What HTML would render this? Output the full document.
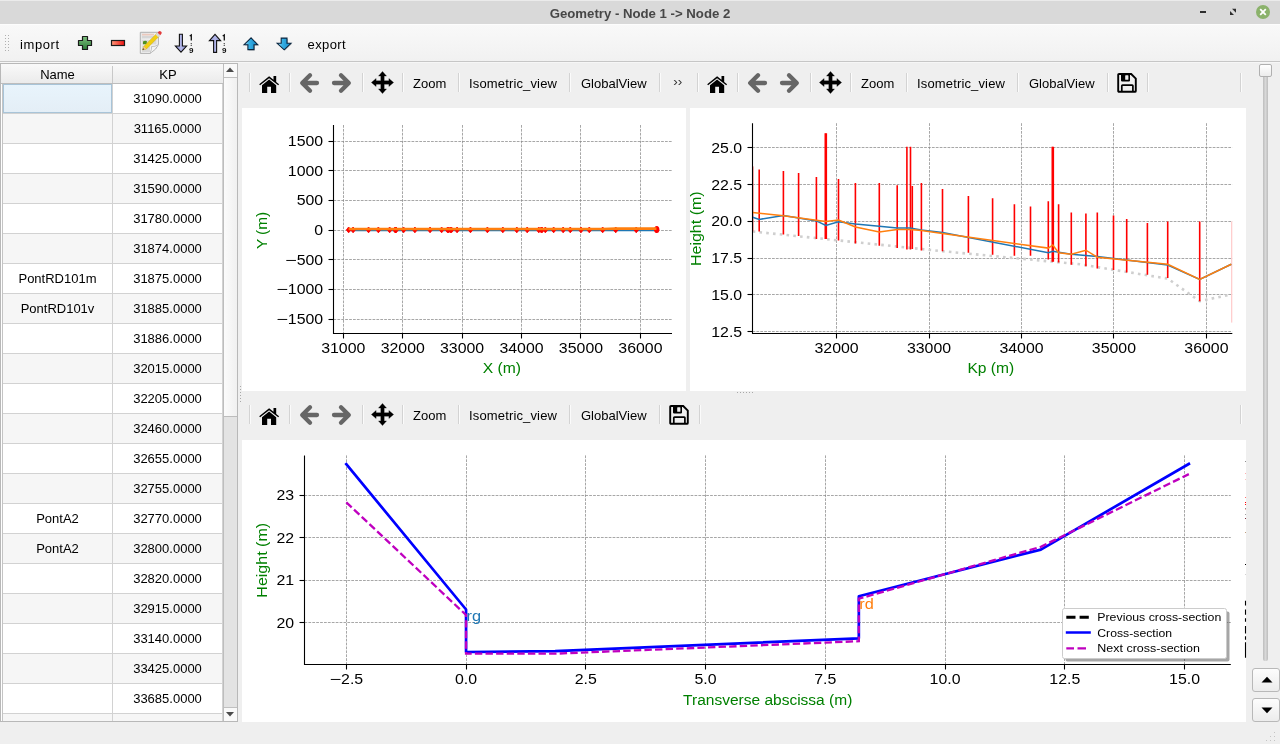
<!DOCTYPE html>
<html><head><meta charset="utf-8">
<style>
*{margin:0;padding:0;box-sizing:border-box}
html,body{width:1280px;height:744px;overflow:hidden;-webkit-font-smoothing:antialiased;will-change:transform;background:#efefef;font-family:"Liberation Sans",sans-serif;font-size:13px;color:#000;position:relative}
div{position:absolute}
svg{position:absolute;overflow:visible}
.t13{font-size:13px;white-space:nowrap}
.row{left:2px;width:220px;height:30px;border-bottom:1px solid #d2d2d2}
.c1,.c2{top:0;height:29px;line-height:30px;text-align:center;white-space:nowrap}
.c1{left:0;width:110px;border-right:1px solid #d2d2d2}
.c2{left:110px;width:110px;border-right:1px solid #d2d2d2}
.sep{width:2px;height:19px;border-left:1px solid #d4d4d4;border-right:1px solid #fbfbfb}
.canvas{background:#fff}
</style></head><body>

<div style="left:0;top:0;width:1280px;height:24px;background:#d9d9d9;border-top:1px solid #ebebeb"></div>
<div class="t13" style="left:0;top:6px;width:1280px;text-align:center;font-weight:bold;color:#474747;font-size:13.2px;line-height:16px">Geometry - Node 1 -&gt; Node 2</div>
<div style="left:1200px;top:11px;width:6px;height:2px;background:#2e2e2e"></div>
<svg style="left:1229px;top:8px" width="8" height="8" viewBox="0 0 8 8"><path d="M3 0.8H7V4.8z" fill="#2e2e2e"/><path d="M1 2.9V7H5z" fill="#2e2e2e"/></svg>
<svg style="left:1256px;top:5px" width="14" height="14" viewBox="0 0 14 14"><circle cx="7" cy="7" r="7" fill="#8bb26b"/><path d="M4.2 4.2L9.8 9.8M9.8 4.2L4.2 9.8" stroke="#fff" stroke-width="1.8"/></svg>
<div style="left:0;top:24px;width:1280px;height:37px;background:linear-gradient(#f9f9f9,#f1f1f1);border-top:1px solid #fdfdfd"></div>
<div style="left:0;top:61px;width:1280px;height:1px;background:#c6c6c6"></div>
<div style="left:0;top:62px;width:1280px;height:1px;background:#f6f6f6"></div>
<div style="left:5px;top:35px;width:1px;height:1px;background:#b0b0b0"></div>
<div style="left:8px;top:35px;width:1px;height:1px;background:#b0b0b0"></div>
<div style="left:5px;top:38px;width:1px;height:1px;background:#b0b0b0"></div>
<div style="left:8px;top:38px;width:1px;height:1px;background:#b0b0b0"></div>
<div style="left:5px;top:41px;width:1px;height:1px;background:#b0b0b0"></div>
<div style="left:8px;top:41px;width:1px;height:1px;background:#b0b0b0"></div>
<div style="left:5px;top:44px;width:1px;height:1px;background:#b0b0b0"></div>
<div style="left:8px;top:44px;width:1px;height:1px;background:#b0b0b0"></div>
<div style="left:5px;top:47px;width:1px;height:1px;background:#b0b0b0"></div>
<div style="left:8px;top:47px;width:1px;height:1px;background:#b0b0b0"></div>
<div style="left:5px;top:50px;width:1px;height:1px;background:#b0b0b0"></div>
<div style="left:8px;top:50px;width:1px;height:1px;background:#b0b0b0"></div>
<div class="t13" style="left:20px;top:37px;line-height:16px;letter-spacing:0.6px">import</div>
<div class="t13" style="left:307.5px;top:37px;line-height:16px;letter-spacing:0.4px">export</div>
<svg style="left:77px;top:35px" width="16" height="16" viewBox="0 0 16 16">
<defs><linearGradient id="gp" x1="0" y1="0" x2="0" y2="1"><stop offset="0" stop-color="#7fc17f"/><stop offset="1" stop-color="#2d7a36"/></linearGradient></defs>
<path d="M5.5 1.5h5v4h4v5h-4v4h-5v-4h-4v-5h4z" fill="url(#gp)" stroke="#1a1a1a" stroke-width="1.2" stroke-linejoin="round"/></svg>
<svg style="left:110px;top:39px" width="16" height="8" viewBox="0 0 16 8">
<defs><linearGradient id="gm" x1="0" y1="0" x2="1" y2="0"><stop offset="0" stop-color="#ff9a7a"/><stop offset="1" stop-color="#ee1111"/></linearGradient></defs>
<rect x="1.5" y="1.5" width="13" height="5" fill="url(#gm)" stroke="#1a1a1a" stroke-width="1.2"/></svg>
<svg style="left:136px;top:28px" width="30" height="28" viewBox="0 0 30 28">
<defs><linearGradient id="gd" x1="0" y1="0" x2="1" y2="1"><stop offset="0" stop-color="#e6e6e6"/><stop offset="1" stop-color="#f8f8f8"/></linearGradient></defs>
<path d="M4.3 4.3H22.4V16.6Q21 21 14.2 25.4H4.3z" fill="url(#gd)" stroke="#a9a9a9" stroke-width="0.9"/>
<path d="M14.2 25.4Q16 20.5 15.5 18.5Q19 19 22.4 16.6" fill="#f4f4f4" stroke="#b4b4b4" stroke-width="0.8"/>
<rect x="6" y="5.8" width="12" height="1.7" fill="#ecc9bd"/>
<rect x="6" y="8" width="14.5" height="2.3" fill="#d6d6d6"/>
<rect x="6" y="12" width="14.5" height="4.5" fill="#d9d9d9"/>
<path d="M7 13.5Q9 12.2 11 13.3L10.5 16.3H7z" fill="#4f8f1f"/>
<rect x="6" y="17.5" width="8" height="6.5" fill="#d9d9d9"/>
<path d="M6.6 21.8L7.8 18.4 20.8 5.4 23.4 8 10.4 21z" fill="#f2cf12" stroke="#c9a400" stroke-width="0.5"/>
<path d="M6.6 21.8L7.8 18.4 10.4 21z" fill="#f1c2a0"/>
<path d="M6.5 21.9L7.1 20.2 8.3 21.3z" fill="#222"/>
<path d="M19.6 6.6L21.6 4.6 24.2 7.2 22.2 9.2z" fill="#d8d8d8"/>
<path d="M21.6 4.6L23 3.2Q24 2.6 24.9 3.5L25.5 4.1Q26 5 25.4 5.8L24.2 7.2z" fill="#e23b3b"/>
</svg>
<svg style="left:175px;top:33px" width="22" height="21" viewBox="0 0 22 21">
<defs><linearGradient id="gs" x1="0" y1="0" x2="1" y2="0"><stop offset="0" stop-color="#8a8fc8"/><stop offset="0.5" stop-color="#b4b8ec"/><stop offset="1" stop-color="#8a8ec6"/></linearGradient></defs>
<path d="M4.4 1.3h3v11.7h4.2l-5.6 6.2-5.6-6.2h4z" fill="url(#gs)" stroke="#111" stroke-width="1.1" stroke-linejoin="miter"/>
<path d="M14.7 3L16.3 2V7.6" fill="none" stroke="#111" stroke-width="1.3"/>
<circle cx="16.2" cy="10.6" r="0.6" fill="#111"/><circle cx="16.2" cy="12.3" r="0.6" fill="#111"/>
<text x="16.2" y="20" font-size="8" font-weight="bold" text-anchor="middle" fill="#111" font-family="Liberation Sans">9</text>
</svg>
<svg style="left:208px;top:33px" width="22" height="21" viewBox="0 0 22 21">
<path d="M5.6 19.4v-11.8h-4.2l5.6-6.2 5.6 6.2h-4v11.8z" fill="url(#gs)" stroke="#111" stroke-width="1.1" stroke-linejoin="miter"/>
<path d="M14.7 3L16.3 2V7.6" fill="none" stroke="#111" stroke-width="1.3"/>
<circle cx="16.2" cy="10.6" r="0.6" fill="#111"/><circle cx="16.2" cy="12.3" r="0.6" fill="#111"/>
<text x="16.2" y="20" font-size="8" font-weight="bold" text-anchor="middle" fill="#111" font-family="Liberation Sans">9</text>
</svg>
<svg style="left:243px;top:37px" width="17" height="15" viewBox="0 0 17 15">
<defs><linearGradient id="gb" x1="0" y1="0" x2="1" y2="0"><stop offset="0" stop-color="#bfeaff"/><stop offset="0.35" stop-color="#39b2e6"/><stop offset="1" stop-color="#1587c8"/></linearGradient></defs>
<path d="M8.9 1.7L15.5 8.5H11.8V13.4H5.7V8.5H1.9z" fill="#000" fill-opacity="0.25"/>
<path d="M8.1 0.9L14.7 7.7H11V12.6H4.9V7.7H1.1z" fill="url(#gb)" stroke="#0a2640" stroke-width="1.1" stroke-linejoin="miter"/></svg>
<svg style="left:276px;top:37px" width="17" height="15" viewBox="0 0 17 15">
<path d="M6 1.9H11.8V7.1H15.8L9 13.6 2 7.1H6z" fill="#000" fill-opacity="0.25"/>
<path d="M5.2 1.1H11V6.3H15L8.2 12.8 1.2 6.3H5.2z" fill="url(#gb)" stroke="#0a2640" stroke-width="1.1" stroke-linejoin="miter"/></svg>
<div style="left:0;top:63px;width:238px;height:659px;background:#fff;border:1px solid #b8b8b8;overflow:hidden">
<div style="left:0;top:0;width:222px;height:20px;background:linear-gradient(#f9f9f9,#ebebeb);border-bottom:1px solid #bdbdbd"></div>
<div style="left:111px;top:2px;width:1px;height:17px;background:#c8c8c8"></div>
<div class="t13" style="left:1px;top:3px;width:111px;text-align:center;line-height:16px">Name</div>
<div class="t13" style="left:112px;top:3px;width:110px;text-align:center;line-height:16px">KP</div>
<div class="row" style="top:20px;background:#ffffff"><div class="c1"></div><div class="c2">31090.0000</div></div>
<div class="row" style="top:50px;background:#f6f6f6"><div class="c1"></div><div class="c2">31165.0000</div></div>
<div class="row" style="top:80px;background:#ffffff"><div class="c1"></div><div class="c2">31425.0000</div></div>
<div class="row" style="top:110px;background:#f6f6f6"><div class="c1"></div><div class="c2">31590.0000</div></div>
<div class="row" style="top:140px;background:#ffffff"><div class="c1"></div><div class="c2">31780.0000</div></div>
<div class="row" style="top:170px;background:#f6f6f6"><div class="c1"></div><div class="c2">31874.0000</div></div>
<div class="row" style="top:200px;background:#ffffff"><div class="c1">PontRD101m</div><div class="c2">31875.0000</div></div>
<div class="row" style="top:230px;background:#f6f6f6"><div class="c1">PontRD101v</div><div class="c2">31885.0000</div></div>
<div class="row" style="top:260px;background:#ffffff"><div class="c1"></div><div class="c2">31886.0000</div></div>
<div class="row" style="top:290px;background:#f6f6f6"><div class="c1"></div><div class="c2">32015.0000</div></div>
<div class="row" style="top:320px;background:#ffffff"><div class="c1"></div><div class="c2">32205.0000</div></div>
<div class="row" style="top:350px;background:#f6f6f6"><div class="c1"></div><div class="c2">32460.0000</div></div>
<div class="row" style="top:380px;background:#ffffff"><div class="c1"></div><div class="c2">32655.0000</div></div>
<div class="row" style="top:410px;background:#f6f6f6"><div class="c1"></div><div class="c2">32755.0000</div></div>
<div class="row" style="top:440px;background:#ffffff"><div class="c1">PontA2</div><div class="c2">32770.0000</div></div>
<div class="row" style="top:470px;background:#f6f6f6"><div class="c1">PontA2</div><div class="c2">32800.0000</div></div>
<div class="row" style="top:500px;background:#ffffff"><div class="c1"></div><div class="c2">32820.0000</div></div>
<div class="row" style="top:530px;background:#f6f6f6"><div class="c1"></div><div class="c2">32915.0000</div></div>
<div class="row" style="top:560px;background:#ffffff"><div class="c1"></div><div class="c2">33140.0000</div></div>
<div class="row" style="top:590px;background:#f6f6f6"><div class="c1"></div><div class="c2">33425.0000</div></div>
<div class="row" style="top:620px;background:#ffffff"><div class="c1"></div><div class="c2">33685.0000</div></div>
<div class="row" style="top:650px;background:#f6f6f6"><div class="c1"></div><div class="c2">33920.0000</div></div>
<div style="left:1px;top:20px;width:1px;height:640px;background:#c4c4c4"></div>
<div style="left:2px;top:20px;width:109px;height:29px;background:linear-gradient(#e8f4fc,#e4eef6);border:1px solid #a8c4d8"></div>
<div style="left:222px;top:0;width:14px;height:657px;background:#e3e3e3;border-left:1px solid #bdbdbd"></div>
<div style="left:223px;top:0;width:13px;height:14px;background:#f9f9f9;border-bottom:1px solid #c0c0c0"></div>
<svg style="left:225px;top:3px" width="8" height="5" viewBox="0 0 8 5"><path d="M0 5L4 0.5 8 5z" fill="#4a4a4a"/></svg>
<div style="left:223px;top:14px;width:13px;height:339px;background:linear-gradient(90deg,#fbfbfb,#f0f0f0);border-bottom:1px solid #bcbcbc"></div>
<div style="left:223px;top:643px;width:13px;height:14px;background:#f9f9f9;border-top:1px solid #c0c0c0"></div>
<svg style="left:225px;top:648px" width="8" height="5" viewBox="0 0 8 5"><path d="M0 0L4 4.5 8 0z" fill="#4a4a4a"/></svg>
</div>
<div style="left:249px;top:73.0px;width:1px;height:19px;background:#d3d3d3"></div>
<div style="left:250px;top:73.0px;width:1px;height:19px;background:#fbfbfb"></div>
<svg style="left:258.5px;top:75.5px" width="21" height="17" viewBox="0 0 21 17">
<path d="M10.1 0.3L0.2 8.2 1.1 9.3 10.1 2.2 19.2 9.3 20.1 8.2 17.2 5.9V0.1h-2.7v3.7z" fill="#000"/>
<path d="M3 9.2L10.1 3.6 17.2 9.2V17H12V10.8H8.2V17H3z" fill="#000"/></svg>
<div style="left:289px;top:73.0px;width:1px;height:19px;background:#d3d3d3"></div>
<div style="left:290px;top:73.0px;width:1px;height:19px;background:#fbfbfb"></div>
<svg style="left:300px;top:72.5px" width="19" height="20" viewBox="0 0 19 20"><path d="M10 2.2L2.2 10 10 17.8M2.5 10H17" fill="none" stroke="#666" stroke-width="4.3" stroke-linecap="round" stroke-linejoin="round"/></svg>
<svg style="left:332px;top:72.5px" width="19" height="20" viewBox="0 0 19 20"><path d="M9 2.2L16.8 10 9 17.8M16.5 10H2" fill="none" stroke="#666" stroke-width="4.3" stroke-linecap="round" stroke-linejoin="round"/></svg>
<div style="left:362px;top:73.0px;width:1px;height:19px;background:#d3d3d3"></div>
<div style="left:363px;top:73.0px;width:1px;height:19px;background:#fbfbfb"></div>
<svg style="left:370.8px;top:71.0px" width="23" height="23" viewBox="0 0 23 23">
<path d="M11.5 0.4L15.5 5.1H13.2V9.8H17.9V7.5L22.6 11.5 17.9 15.5V13.2H13.2V17.9H15.5L11.5 22.6 7.5 17.9H9.8V13.2H5.1V15.5L0.4 11.5 5.1 7.5V9.8H9.8V5.1H7.5z" fill="#000" stroke="#000" stroke-width="0.3" stroke-linejoin="round"/></svg>
<div style="left:402px;top:73.0px;width:1px;height:19px;background:#d3d3d3"></div>
<div style="left:403px;top:73.0px;width:1px;height:19px;background:#fbfbfb"></div>
<div class="t13" style="left:413px;top:76.3px;line-height:15px">Zoom</div>
<div style="left:458px;top:73.0px;width:1px;height:19px;background:#d3d3d3"></div>
<div style="left:459px;top:73.0px;width:1px;height:19px;background:#fbfbfb"></div>
<div class="t13" style="left:469px;top:76.3px;line-height:15px"><span style="letter-spacing:0.15px">Isometric_view</span></div>
<div style="left:569px;top:73.0px;width:1px;height:19px;background:#d3d3d3"></div>
<div style="left:570px;top:73.0px;width:1px;height:19px;background:#fbfbfb"></div>
<div class="t13" style="left:581px;top:76.3px;line-height:15px">GlobalView</div>
<div style="left:659px;top:73.0px;width:1px;height:19px;background:#d3d3d3"></div>
<div style="left:660px;top:73.0px;width:1px;height:19px;background:#fbfbfb"></div>
<div class="t13" style="left:673.3px;top:73.8px;line-height:15px;font-size:13.5px;color:#333">&#8250;&#8250;</div>
<div style="left:697px;top:73.0px;width:1px;height:19px;background:#d3d3d3"></div>
<div style="left:698px;top:73.0px;width:1px;height:19px;background:#fbfbfb"></div>
<svg style="left:706.5px;top:75.5px" width="21" height="17" viewBox="0 0 21 17">
<path d="M10.1 0.3L0.2 8.2 1.1 9.3 10.1 2.2 19.2 9.3 20.1 8.2 17.2 5.9V0.1h-2.7v3.7z" fill="#000"/>
<path d="M3 9.2L10.1 3.6 17.2 9.2V17H12V10.8H8.2V17H3z" fill="#000"/></svg>
<div style="left:737px;top:73.0px;width:1px;height:19px;background:#d3d3d3"></div>
<div style="left:738px;top:73.0px;width:1px;height:19px;background:#fbfbfb"></div>
<svg style="left:748px;top:72.5px" width="19" height="20" viewBox="0 0 19 20"><path d="M10 2.2L2.2 10 10 17.8M2.5 10H17" fill="none" stroke="#666" stroke-width="4.3" stroke-linecap="round" stroke-linejoin="round"/></svg>
<svg style="left:780px;top:72.5px" width="19" height="20" viewBox="0 0 19 20"><path d="M9 2.2L16.8 10 9 17.8M16.5 10H2" fill="none" stroke="#666" stroke-width="4.3" stroke-linecap="round" stroke-linejoin="round"/></svg>
<div style="left:810px;top:73.0px;width:1px;height:19px;background:#d3d3d3"></div>
<div style="left:811px;top:73.0px;width:1px;height:19px;background:#fbfbfb"></div>
<svg style="left:818.8px;top:71.0px" width="23" height="23" viewBox="0 0 23 23">
<path d="M11.5 0.4L15.5 5.1H13.2V9.8H17.9V7.5L22.6 11.5 17.9 15.5V13.2H13.2V17.9H15.5L11.5 22.6 7.5 17.9H9.8V13.2H5.1V15.5L0.4 11.5 5.1 7.5V9.8H9.8V5.1H7.5z" fill="#000" stroke="#000" stroke-width="0.3" stroke-linejoin="round"/></svg>
<div style="left:850px;top:73.0px;width:1px;height:19px;background:#d3d3d3"></div>
<div style="left:851px;top:73.0px;width:1px;height:19px;background:#fbfbfb"></div>
<div class="t13" style="left:861px;top:76.3px;line-height:15px">Zoom</div>
<div style="left:906px;top:73.0px;width:1px;height:19px;background:#d3d3d3"></div>
<div style="left:907px;top:73.0px;width:1px;height:19px;background:#fbfbfb"></div>
<div class="t13" style="left:917px;top:76.3px;line-height:15px"><span style="letter-spacing:0.15px">Isometric_view</span></div>
<div style="left:1017px;top:73.0px;width:1px;height:19px;background:#d3d3d3"></div>
<div style="left:1018px;top:73.0px;width:1px;height:19px;background:#fbfbfb"></div>
<div class="t13" style="left:1029px;top:76.3px;line-height:15px">GlobalView</div>
<div style="left:1107px;top:73.0px;width:1px;height:19px;background:#d3d3d3"></div>
<div style="left:1108px;top:73.0px;width:1px;height:19px;background:#fbfbfb"></div>
<svg style="left:1117px;top:72.5px" width="20" height="20" viewBox="0 0 20 20">
<path d="M1.2 1.9Q1.2 1 2.1 1H14.2L18.8 5.6V17.9Q18.8 18.8 17.9 18.8H2.1Q1.2 18.8 1.2 17.9z" fill="none" stroke="#000" stroke-width="1.9"/>
<path d="M4 1H13V7.6Q13 8.4 12.2 8.4H4.8Q4 8.4 4 7.6z" fill="#000"/>
<rect x="8.2" y="2.2" width="3.2" height="4.6" rx="0.6" fill="#efefef"/>
<path d="M4.8 18.5V12.8Q4.8 12.1 5.5 12.1H15.2Q15.9 12.1 15.9 12.8V18.5" fill="none" stroke="#000" stroke-width="1.7"/>
</svg>
<div style="left:1147px;top:73.0px;width:1px;height:19px;background:#d3d3d3"></div>
<div style="left:1148px;top:73.0px;width:1px;height:19px;background:#fbfbfb"></div>
<div style="left:1240px;top:73.0px;width:1px;height:19px;background:#d3d3d3"></div>
<div style="left:1241px;top:73.0px;width:1px;height:19px;background:#fbfbfb"></div>
<div style="left:249px;top:405.0px;width:1px;height:19px;background:#d3d3d3"></div>
<div style="left:250px;top:405.0px;width:1px;height:19px;background:#fbfbfb"></div>
<svg style="left:258.5px;top:407.5px" width="21" height="17" viewBox="0 0 21 17">
<path d="M10.1 0.3L0.2 8.2 1.1 9.3 10.1 2.2 19.2 9.3 20.1 8.2 17.2 5.9V0.1h-2.7v3.7z" fill="#000"/>
<path d="M3 9.2L10.1 3.6 17.2 9.2V17H12V10.8H8.2V17H3z" fill="#000"/></svg>
<div style="left:289px;top:405.0px;width:1px;height:19px;background:#d3d3d3"></div>
<div style="left:290px;top:405.0px;width:1px;height:19px;background:#fbfbfb"></div>
<svg style="left:300px;top:404.5px" width="19" height="20" viewBox="0 0 19 20"><path d="M10 2.2L2.2 10 10 17.8M2.5 10H17" fill="none" stroke="#666" stroke-width="4.3" stroke-linecap="round" stroke-linejoin="round"/></svg>
<svg style="left:332px;top:404.5px" width="19" height="20" viewBox="0 0 19 20"><path d="M9 2.2L16.8 10 9 17.8M16.5 10H2" fill="none" stroke="#666" stroke-width="4.3" stroke-linecap="round" stroke-linejoin="round"/></svg>
<div style="left:362px;top:405.0px;width:1px;height:19px;background:#d3d3d3"></div>
<div style="left:363px;top:405.0px;width:1px;height:19px;background:#fbfbfb"></div>
<svg style="left:370.8px;top:403.0px" width="23" height="23" viewBox="0 0 23 23">
<path d="M11.5 0.4L15.5 5.1H13.2V9.8H17.9V7.5L22.6 11.5 17.9 15.5V13.2H13.2V17.9H15.5L11.5 22.6 7.5 17.9H9.8V13.2H5.1V15.5L0.4 11.5 5.1 7.5V9.8H9.8V5.1H7.5z" fill="#000" stroke="#000" stroke-width="0.3" stroke-linejoin="round"/></svg>
<div style="left:402px;top:405.0px;width:1px;height:19px;background:#d3d3d3"></div>
<div style="left:403px;top:405.0px;width:1px;height:19px;background:#fbfbfb"></div>
<div class="t13" style="left:413px;top:408.3px;line-height:15px">Zoom</div>
<div style="left:458px;top:405.0px;width:1px;height:19px;background:#d3d3d3"></div>
<div style="left:459px;top:405.0px;width:1px;height:19px;background:#fbfbfb"></div>
<div class="t13" style="left:469px;top:408.3px;line-height:15px"><span style="letter-spacing:0.15px">Isometric_view</span></div>
<div style="left:569px;top:405.0px;width:1px;height:19px;background:#d3d3d3"></div>
<div style="left:570px;top:405.0px;width:1px;height:19px;background:#fbfbfb"></div>
<div class="t13" style="left:581px;top:408.3px;line-height:15px">GlobalView</div>
<div style="left:659px;top:405.0px;width:1px;height:19px;background:#d3d3d3"></div>
<div style="left:660px;top:405.0px;width:1px;height:19px;background:#fbfbfb"></div>
<svg style="left:669px;top:404.5px" width="20" height="20" viewBox="0 0 20 20">
<path d="M1.2 1.9Q1.2 1 2.1 1H14.2L18.8 5.6V17.9Q18.8 18.8 17.9 18.8H2.1Q1.2 18.8 1.2 17.9z" fill="none" stroke="#000" stroke-width="1.9"/>
<path d="M4 1H13V7.6Q13 8.4 12.2 8.4H4.8Q4 8.4 4 7.6z" fill="#000"/>
<rect x="8.2" y="2.2" width="3.2" height="4.6" rx="0.6" fill="#efefef"/>
<path d="M4.8 18.5V12.8Q4.8 12.1 5.5 12.1H15.2Q15.9 12.1 15.9 12.8V18.5" fill="none" stroke="#000" stroke-width="1.7"/>
</svg>
<div style="left:699px;top:405.0px;width:1px;height:19px;background:#d3d3d3"></div>
<div style="left:700px;top:405.0px;width:1px;height:19px;background:#fbfbfb"></div>
<div style="left:1240px;top:405.0px;width:1px;height:19px;background:#d3d3d3"></div>
<div style="left:1241px;top:405.0px;width:1px;height:19px;background:#fbfbfb"></div>
<div class="canvas" style="left:242px;top:108px;width:444px;height:283px"></div>
<div class="canvas" style="left:690px;top:108px;width:556px;height:283px"></div>
<div class="canvas" style="left:242px;top:440px;width:1004px;height:282px"></div>
<div style="left:240px;top:386px;width:1px;height:1px;background:#a8a8a8"></div>
<div style="left:240px;top:389px;width:1px;height:1px;background:#a8a8a8"></div>
<div style="left:240px;top:392px;width:1px;height:1px;background:#a8a8a8"></div>
<div style="left:240px;top:395px;width:1px;height:1px;background:#a8a8a8"></div>
<div style="left:240px;top:398px;width:1px;height:1px;background:#a8a8a8"></div>
<div style="left:240px;top:401px;width:1px;height:1px;background:#a8a8a8"></div>
<div style="left:737px;top:392px;width:1px;height:1px;background:#a8a8a8"></div>
<div style="left:740px;top:392px;width:1px;height:1px;background:#a8a8a8"></div>
<div style="left:743px;top:392px;width:1px;height:1px;background:#a8a8a8"></div>
<div style="left:746px;top:392px;width:1px;height:1px;background:#a8a8a8"></div>
<div style="left:749px;top:392px;width:1px;height:1px;background:#a8a8a8"></div>
<div style="left:752px;top:392px;width:1px;height:1px;background:#a8a8a8"></div>
<div style="left:1263px;top:70px;width:5px;height:591px;background:linear-gradient(90deg,#bdbdbd,#d8d8d8,#bdbdbd);border-radius:2px"></div>
<div style="left:1259px;top:64px;width:13px;height:13px;background:linear-gradient(#ffffff,#ececec);border:1px solid #b0b0b0;border-radius:2px"></div>
<div style="left:1252px;top:668px;width:28px;height:24px;background:linear-gradient(#fdfdfd,#ececec);border:1px solid #b8b8b8;border-radius:3px"></div>
<svg style="left:1260.5px;top:676px" width="12" height="7" viewBox="0 0 12 7"><path d="M0.5 6.5L6 0.8 11.5 6.5z" fill="#000"/></svg>
<div style="left:1252px;top:698px;width:28px;height:24px;background:linear-gradient(#fdfdfd,#ececec);border:1px solid #b8b8b8;border-radius:3px"></div>
<svg style="left:1260.5px;top:707px" width="12" height="7" viewBox="0 0 12 7"><path d="M0.5 0.5L6 6.2 11.5 0.5z" fill="#000"/></svg>
<div style="left:1274px;top:732px;width:1px;height:1px;background:#c4c4c4"></div>
<div style="left:1274px;top:736px;width:1px;height:1px;background:#c4c4c4"></div>
<div style="left:1274px;top:740px;width:1px;height:1px;background:#c4c4c4"></div>
<div style="left:1270px;top:736px;width:1px;height:1px;background:#c4c4c4"></div>
<div style="left:1270px;top:740px;width:1px;height:1px;background:#c4c4c4"></div>
<div style="left:1266px;top:740px;width:1px;height:1px;background:#c4c4c4"></div>
<svg style="left:0;top:0" width="1280" height="744" viewBox="0 0 1280 744" font-family="Liberation Sans" font-size="14.6">
<defs>
<clipPath id="cp1"><rect x="333.5" y="125" width="338.5" height="208.5"/></clipPath>
<clipPath id="cp2"><rect x="752.5" y="123.2" width="479.8" height="210.3"/></clipPath>
<clipPath id="cp3"><rect x="304.5" y="455.4" width="926.3" height="209.1"/></clipPath>
</defs>
<path d="M343.50 125V333.5" stroke="#8a8a8a" stroke-width="0.75" stroke-dasharray="2.75 1.15" fill="none"/>
<path d="M402.50 125V333.5" stroke="#8a8a8a" stroke-width="0.75" stroke-dasharray="2.75 1.15" fill="none"/>
<path d="M462.50 125V333.5" stroke="#8a8a8a" stroke-width="0.75" stroke-dasharray="2.75 1.15" fill="none"/>
<path d="M521.50 125V333.5" stroke="#8a8a8a" stroke-width="0.75" stroke-dasharray="2.75 1.15" fill="none"/>
<path d="M580.50 125V333.5" stroke="#8a8a8a" stroke-width="0.75" stroke-dasharray="2.75 1.15" fill="none"/>
<path d="M640.50 125V333.5" stroke="#8a8a8a" stroke-width="0.75" stroke-dasharray="2.75 1.15" fill="none"/>
<path d="M333.5 319.50H672" stroke="#8a8a8a" stroke-width="0.75" stroke-dasharray="2.75 1.15" fill="none"/>
<path d="M333.5 289.50H672" stroke="#8a8a8a" stroke-width="0.75" stroke-dasharray="2.75 1.15" fill="none"/>
<path d="M333.5 259.50H672" stroke="#8a8a8a" stroke-width="0.75" stroke-dasharray="2.75 1.15" fill="none"/>
<path d="M333.5 230.50H672" stroke="#8a8a8a" stroke-width="0.75" stroke-dasharray="2.75 1.15" fill="none"/>
<path d="M333.5 200.50H672" stroke="#8a8a8a" stroke-width="0.75" stroke-dasharray="2.75 1.15" fill="none"/>
<path d="M333.5 170.50H672" stroke="#8a8a8a" stroke-width="0.75" stroke-dasharray="2.75 1.15" fill="none"/>
<path d="M333.5 141.50H672" stroke="#8a8a8a" stroke-width="0.75" stroke-dasharray="2.75 1.15" fill="none"/>
<g clip-path="url(#cp1)">
<polyline points="348.65,230.60 353.10,230.60 368.55,230.60 378.36,230.60 389.65,230.60 395.23,230.60 395.29,230.60 395.89,230.60 395.95,230.60 403.61,230.60 414.90,230.60 430.05,230.60 441.64,230.60 447.58,230.60 448.47,230.60 450.26,230.60 451.44,230.60 457.09,230.60 470.46,230.60 487.39,230.60 502.84,230.60 516.81,230.60 527.20,230.60 538.79,230.60 541.17,230.60 542.06,230.60 545.33,230.60 553.65,230.60 563.15,230.60 570.28,230.60 580.98,230.60 589.30,230.60 602.67,230.60 615.74,230.60 636.24,230.60 656.44,230.60" fill="none" stroke="#1f77b4" stroke-width="1.1"/>
<path d="M348.65 227L350.95 229.9 348.65 232.8 346.35 229.9z" fill="#ff0000" stroke="#ff0000" stroke-width="0.9" stroke-linejoin="round"/>
<path d="M353.10 227L355.40 229.9 353.10 232.8 350.80 229.9z" fill="#ff0000" stroke="#ff0000" stroke-width="0.9" stroke-linejoin="round"/>
<path d="M368.55 227L370.85 229.9 368.55 232.8 366.25 229.9z" fill="#ff0000" stroke="#ff0000" stroke-width="0.9" stroke-linejoin="round"/>
<path d="M378.36 227L380.66 229.9 378.36 232.8 376.06 229.9z" fill="#ff0000" stroke="#ff0000" stroke-width="0.9" stroke-linejoin="round"/>
<path d="M389.65 227L391.95 229.9 389.65 232.8 387.35 229.9z" fill="#ff0000" stroke="#ff0000" stroke-width="0.9" stroke-linejoin="round"/>
<path d="M395.23 227L397.53 229.9 395.23 232.8 392.93 229.9z" fill="#ff0000" stroke="#ff0000" stroke-width="0.9" stroke-linejoin="round"/>
<path d="M395.29 227L397.59 229.9 395.29 232.8 392.99 229.9z" fill="#ff0000" stroke="#ff0000" stroke-width="0.9" stroke-linejoin="round"/>
<path d="M395.89 227L398.19 229.9 395.89 232.8 393.59 229.9z" fill="#ff0000" stroke="#ff0000" stroke-width="0.9" stroke-linejoin="round"/>
<path d="M395.95 227L398.25 229.9 395.95 232.8 393.65 229.9z" fill="#ff0000" stroke="#ff0000" stroke-width="0.9" stroke-linejoin="round"/>
<path d="M403.61 227L405.91 229.9 403.61 232.8 401.31 229.9z" fill="#ff0000" stroke="#ff0000" stroke-width="0.9" stroke-linejoin="round"/>
<path d="M414.90 227L417.20 229.9 414.90 232.8 412.60 229.9z" fill="#ff0000" stroke="#ff0000" stroke-width="0.9" stroke-linejoin="round"/>
<path d="M430.05 227L432.35 229.9 430.05 232.8 427.75 229.9z" fill="#ff0000" stroke="#ff0000" stroke-width="0.9" stroke-linejoin="round"/>
<path d="M441.64 227L443.94 229.9 441.64 232.8 439.34 229.9z" fill="#ff0000" stroke="#ff0000" stroke-width="0.9" stroke-linejoin="round"/>
<path d="M447.58 227L449.88 229.9 447.58 232.8 445.28 229.9z" fill="#ff0000" stroke="#ff0000" stroke-width="0.9" stroke-linejoin="round"/>
<path d="M448.47 227L450.77 229.9 448.47 232.8 446.17 229.9z" fill="#ff0000" stroke="#ff0000" stroke-width="0.9" stroke-linejoin="round"/>
<path d="M450.26 227L452.56 229.9 450.26 232.8 447.96 229.9z" fill="#ff0000" stroke="#ff0000" stroke-width="0.9" stroke-linejoin="round"/>
<path d="M451.44 227L453.74 229.9 451.44 232.8 449.14 229.9z" fill="#ff0000" stroke="#ff0000" stroke-width="0.9" stroke-linejoin="round"/>
<path d="M457.09 227L459.39 229.9 457.09 232.8 454.79 229.9z" fill="#ff0000" stroke="#ff0000" stroke-width="0.9" stroke-linejoin="round"/>
<path d="M470.46 227L472.76 229.9 470.46 232.8 468.16 229.9z" fill="#ff0000" stroke="#ff0000" stroke-width="0.9" stroke-linejoin="round"/>
<path d="M487.39 227L489.69 229.9 487.39 232.8 485.09 229.9z" fill="#ff0000" stroke="#ff0000" stroke-width="0.9" stroke-linejoin="round"/>
<path d="M502.84 227L505.14 229.9 502.84 232.8 500.54 229.9z" fill="#ff0000" stroke="#ff0000" stroke-width="0.9" stroke-linejoin="round"/>
<path d="M516.81 227L519.11 229.9 516.81 232.8 514.51 229.9z" fill="#ff0000" stroke="#ff0000" stroke-width="0.9" stroke-linejoin="round"/>
<path d="M527.20 227L529.50 229.9 527.20 232.8 524.90 229.9z" fill="#ff0000" stroke="#ff0000" stroke-width="0.9" stroke-linejoin="round"/>
<path d="M538.79 227L541.09 229.9 538.79 232.8 536.49 229.9z" fill="#ff0000" stroke="#ff0000" stroke-width="0.9" stroke-linejoin="round"/>
<path d="M541.17 227L543.47 229.9 541.17 232.8 538.87 229.9z" fill="#ff0000" stroke="#ff0000" stroke-width="0.9" stroke-linejoin="round"/>
<path d="M542.06 227L544.36 229.9 542.06 232.8 539.76 229.9z" fill="#ff0000" stroke="#ff0000" stroke-width="0.9" stroke-linejoin="round"/>
<path d="M545.33 227L547.63 229.9 545.33 232.8 543.03 229.9z" fill="#ff0000" stroke="#ff0000" stroke-width="0.9" stroke-linejoin="round"/>
<path d="M553.65 227L555.95 229.9 553.65 232.8 551.35 229.9z" fill="#ff0000" stroke="#ff0000" stroke-width="0.9" stroke-linejoin="round"/>
<path d="M563.15 227L565.45 229.9 563.15 232.8 560.85 229.9z" fill="#ff0000" stroke="#ff0000" stroke-width="0.9" stroke-linejoin="round"/>
<path d="M570.28 227L572.58 229.9 570.28 232.8 567.98 229.9z" fill="#ff0000" stroke="#ff0000" stroke-width="0.9" stroke-linejoin="round"/>
<path d="M580.98 227L583.28 229.9 580.98 232.8 578.68 229.9z" fill="#ff0000" stroke="#ff0000" stroke-width="0.9" stroke-linejoin="round"/>
<path d="M589.30 227L591.60 229.9 589.30 232.8 587.00 229.9z" fill="#ff0000" stroke="#ff0000" stroke-width="0.9" stroke-linejoin="round"/>
<path d="M602.67 227L604.97 229.9 602.67 232.8 600.37 229.9z" fill="#ff0000" stroke="#ff0000" stroke-width="0.9" stroke-linejoin="round"/>
<path d="M615.74 227L618.04 229.9 615.74 232.8 613.44 229.9z" fill="#ff0000" stroke="#ff0000" stroke-width="0.9" stroke-linejoin="round"/>
<path d="M636.24 227L638.54 229.9 636.24 232.8 633.94 229.9z" fill="#ff0000" stroke="#ff0000" stroke-width="0.9" stroke-linejoin="round"/>
<path d="M656.44 227L658.74 229.9 656.44 232.8 654.14 229.9z" fill="#ff0000" stroke="#ff0000" stroke-width="0.9" stroke-linejoin="round"/>
<ellipse cx="656.74" cy="229.6" rx="2.6" ry="3.5" fill="#ff0000"/>
<polyline points="348.65,229.00 353.10,229.00 368.55,229.00 378.36,229.00 389.65,229.00 395.23,229.00 395.29,229.00 395.89,229.00 395.95,229.00 403.61,229.00 414.90,229.00 430.05,229.00 441.64,229.00 447.58,229.00 448.47,229.00 450.26,229.00 451.44,229.00 457.09,229.00 470.46,229.00 487.39,229.00 502.84,229.00 516.81,229.00 527.20,229.00 538.79,229.00 541.17,229.00 542.06,229.00 545.33,229.00 553.65,229.00 563.15,229.00 570.28,229.00 580.98,229.00 589.30,229.00 602.67,229.00 615.74,228.60 636.24,228.60 656.44,228.60" fill="none" stroke="#ff7f0e" stroke-width="2.6"/>
</g>
<path d="M333.5 125V333.5H672" stroke="#000" stroke-width="1.1" fill="none"/>
<path d="M343.50 333.5v5" stroke="#000" stroke-width="1.1"/>
<text x="343.30" y="353.10" text-anchor="middle" fill="#000" font-size="13.89" textLength="44.19" lengthAdjust="spacingAndGlyphs">31000</text>
<path d="M402.50 333.5v5" stroke="#000" stroke-width="1.1"/>
<text x="402.72" y="353.10" text-anchor="middle" fill="#000" font-size="13.89" textLength="44.19" lengthAdjust="spacingAndGlyphs">32000</text>
<path d="M462.50 333.5v5" stroke="#000" stroke-width="1.1"/>
<text x="462.14" y="353.10" text-anchor="middle" fill="#000" font-size="13.89" textLength="44.19" lengthAdjust="spacingAndGlyphs">33000</text>
<path d="M521.50 333.5v5" stroke="#000" stroke-width="1.1"/>
<text x="521.56" y="353.10" text-anchor="middle" fill="#000" font-size="13.89" textLength="44.19" lengthAdjust="spacingAndGlyphs">34000</text>
<path d="M580.50 333.5v5" stroke="#000" stroke-width="1.1"/>
<text x="580.98" y="353.10" text-anchor="middle" fill="#000" font-size="13.89" textLength="44.19" lengthAdjust="spacingAndGlyphs">35000</text>
<path d="M640.50 333.5v5" stroke="#000" stroke-width="1.1"/>
<text x="640.40" y="353.10" text-anchor="middle" fill="#000" font-size="13.89" textLength="44.19" lengthAdjust="spacingAndGlyphs">36000</text>
<path d="M333.5 319.50h-5" stroke="#000" stroke-width="1.1"/>
<text x="323.20" y="324.14" text-anchor="end" fill="#000" font-size="13.89" textLength="35.35" lengthAdjust="spacingAndGlyphs">1500</text>
<text x="287.85" y="324.14" text-anchor="end" fill="#000" font-size="13.89" textLength="11.64" lengthAdjust="spacingAndGlyphs">−</text>
<path d="M333.5 289.50h-5" stroke="#000" stroke-width="1.1"/>
<text x="323.20" y="294.48" text-anchor="end" fill="#000" font-size="13.89" textLength="35.35" lengthAdjust="spacingAndGlyphs">1000</text>
<text x="287.85" y="294.48" text-anchor="end" fill="#000" font-size="13.89" textLength="11.64" lengthAdjust="spacingAndGlyphs">−</text>
<path d="M333.5 259.50h-5" stroke="#000" stroke-width="1.1"/>
<text x="323.20" y="264.81" text-anchor="end" fill="#000" font-size="13.89" textLength="26.51" lengthAdjust="spacingAndGlyphs">500</text>
<text x="296.69" y="264.81" text-anchor="end" fill="#000" font-size="13.89" textLength="11.64" lengthAdjust="spacingAndGlyphs">−</text>
<path d="M333.5 230.50h-5" stroke="#000" stroke-width="1.1"/>
<text x="323.20" y="235.15" text-anchor="end" fill="#000" font-size="13.89" textLength="8.84" lengthAdjust="spacingAndGlyphs">0</text>
<path d="M333.5 200.50h-5" stroke="#000" stroke-width="1.1"/>
<text x="323.20" y="205.49" text-anchor="end" fill="#000" font-size="13.89" textLength="26.51" lengthAdjust="spacingAndGlyphs">500</text>
<path d="M333.5 170.50h-5" stroke="#000" stroke-width="1.1"/>
<text x="323.20" y="175.82" text-anchor="end" fill="#000" font-size="13.89" textLength="35.35" lengthAdjust="spacingAndGlyphs">1000</text>
<path d="M333.5 141.50h-5" stroke="#000" stroke-width="1.1"/>
<text x="323.20" y="146.16" text-anchor="end" fill="#000" font-size="13.89" textLength="35.35" lengthAdjust="spacingAndGlyphs">1500</text>
<text x="501.80" y="372.90" text-anchor="middle" fill="#008000" font-size="13.89" textLength="38.30" lengthAdjust="spacingAndGlyphs">X (m)</text>
<text transform="translate(266.5 230.5) rotate(-90)" text-anchor="middle" fill="#008000" font-size="13.89" textLength="37.27" lengthAdjust="spacingAndGlyphs">Y (m)</text>
<path d="M836.50 123.2V333.5" stroke="#8a8a8a" stroke-width="0.75" stroke-dasharray="2.75 1.15" fill="none"/>
<path d="M929.50 123.2V333.5" stroke="#8a8a8a" stroke-width="0.75" stroke-dasharray="2.75 1.15" fill="none"/>
<path d="M1021.50 123.2V333.5" stroke="#8a8a8a" stroke-width="0.75" stroke-dasharray="2.75 1.15" fill="none"/>
<path d="M1113.50 123.2V333.5" stroke="#8a8a8a" stroke-width="0.75" stroke-dasharray="2.75 1.15" fill="none"/>
<path d="M1206.50 123.2V333.5" stroke="#8a8a8a" stroke-width="0.75" stroke-dasharray="2.75 1.15" fill="none"/>
<path d="M752.5 331.50H1232.3" stroke="#8a8a8a" stroke-width="0.75" stroke-dasharray="2.75 1.15" fill="none"/>
<path d="M752.5 294.50H1232.3" stroke="#8a8a8a" stroke-width="0.75" stroke-dasharray="2.75 1.15" fill="none"/>
<path d="M752.5 258.50H1232.3" stroke="#8a8a8a" stroke-width="0.75" stroke-dasharray="2.75 1.15" fill="none"/>
<path d="M752.5 221.50H1232.3" stroke="#8a8a8a" stroke-width="0.75" stroke-dasharray="2.75 1.15" fill="none"/>
<path d="M752.5 184.50H1232.3" stroke="#8a8a8a" stroke-width="0.75" stroke-dasharray="2.75 1.15" fill="none"/>
<path d="M752.5 147.50H1232.3" stroke="#8a8a8a" stroke-width="0.75" stroke-dasharray="2.75 1.15" fill="none"/>
<g clip-path="url(#cp2)">
<polyline points="752.7,231.5 942.3,251.2 1080,264.3 1167.7,278.6 1199.7,301.2 1231.3,294.4" fill="none" stroke="#cfcfcf" stroke-width="2.6" stroke-dasharray="2.6 4.2"/>
<path d="M753.2 166.4V231.5" stroke="#ff8a8a" stroke-width="1.0"/>
<path d="M759.2 169.5V231.5" stroke="#ff0000" stroke-width="1.6"/>
<path d="M783.4 171V234.5" stroke="#ff0000" stroke-width="1.6"/>
<path d="M798.6 173V236" stroke="#ff0000" stroke-width="1.6"/>
<path d="M816.4 177V239" stroke="#ff0000" stroke-width="1.6"/>
<path d="M825.3 133.2V239" stroke="#ff0000" stroke-width="1.6"/>
<path d="M826.3 133.2V239" stroke="#ff0000" stroke-width="1.6"/>
<path d="M825.8 175V239" stroke="#ff0000" stroke-width="1.6"/>
<path d="M838.5 179V240.6" stroke="#ff0000" stroke-width="1.6"/>
<path d="M855.4 183V243.6" stroke="#ff0000" stroke-width="1.6"/>
<path d="M879.3 183V245.7" stroke="#ff0000" stroke-width="1.6"/>
<path d="M897.2 185.2V248" stroke="#ff0000" stroke-width="1.6"/>
<path d="M906.9 146.8V249.6" stroke="#ff0000" stroke-width="1.6"/>
<path d="M910.5 146.8V249.6" stroke="#ff0000" stroke-width="1.6"/>
<path d="M912.3 186V249" stroke="#ff0000" stroke-width="1.6"/>
<path d="M921.4 183V250.5" stroke="#ff0000" stroke-width="1.6"/>
<path d="M942.5 189V251.2" stroke="#ff0000" stroke-width="1.6"/>
<path d="M968.4 196.1V252.7" stroke="#ff0000" stroke-width="1.6"/>
<path d="M992.6 198.2V254.8" stroke="#ff0000" stroke-width="1.6"/>
<path d="M1014.4 204.3V255.7" stroke="#ff0000" stroke-width="1.6"/>
<path d="M1030.5 206.4V255.7" stroke="#ff0000" stroke-width="1.6"/>
<path d="M1048.3 201.2V259.6" stroke="#ff0000" stroke-width="1.6"/>
<path d="M1052.3 146.8V261.7" stroke="#ff0000" stroke-width="1.6"/>
<path d="M1053.3 146.8V261.7" stroke="#ff0000" stroke-width="1.6"/>
<path d="M1058.6 204.3V262.4" stroke="#ff0000" stroke-width="1.6"/>
<path d="M1071.3 212.4V264.8" stroke="#ff0000" stroke-width="1.6"/>
<path d="M1085.9 213.4V266.3" stroke="#ff0000" stroke-width="1.6"/>
<path d="M1097.3 212.4V268.4" stroke="#ff0000" stroke-width="1.6"/>
<path d="M1113.5 215.4V270" stroke="#ff0000" stroke-width="1.6"/>
<path d="M1126.7 219.1V272.6" stroke="#ff0000" stroke-width="1.6"/>
<path d="M1147.4 222.9V274.8" stroke="#ff0000" stroke-width="1.6"/>
<path d="M1167.7 221.4V277.9" stroke="#ff0000" stroke-width="1.6"/>
<path d="M1199.7 221.4V301.2" stroke="#ff0000" stroke-width="1.6"/>
<path d="M1232 221.4V322.6" stroke="#ff9c9c" stroke-width="1"/>
<polyline points="752.7,217.3 759.2,219.4 783.4,215.5 798.6,217.9 816.4,220.9 825.8,225.4 838.5,221.8 855.4,223.9 879.3,226.3 897.2,227.9 910,227.9 921.4,230 942.5,232.6 1048.3,252.7 1052.8,251.2 1071.3,254.2 1097.3,256.5 1167.7,265 1199.7,279.4 1231.3,264.3" fill="none" stroke="#1f77b4" stroke-width="1.5"/>
<polyline points="752.7,212.4 783.4,215.8 816.4,220.3 825.8,221.5 838.5,220 855.4,227 879.3,232.1 897.2,229.4 910,229.4 921.4,230.6 942.5,233.6 1048.3,248.1 1052.8,245 1058.6,252.7 1071.3,254.2 1085.9,250.2 1097.3,257.2 1167.7,264.3 1199.7,279.4 1231.3,264.3" fill="none" stroke="#ff7f0e" stroke-width="1.5"/>
</g>
<path d="M752.5 123.2V333.5H1232.3" stroke="#000" stroke-width="1.1" fill="none"/>
<path d="M836.50 333.5v5" stroke="#000" stroke-width="1.1"/>
<text x="836.60" y="353.10" text-anchor="middle" fill="#000" font-size="13.89" textLength="44.19" lengthAdjust="spacingAndGlyphs">32000</text>
<path d="M929.50 333.5v5" stroke="#000" stroke-width="1.1"/>
<text x="929.05" y="353.10" text-anchor="middle" fill="#000" font-size="13.89" textLength="44.19" lengthAdjust="spacingAndGlyphs">33000</text>
<path d="M1021.50 333.5v5" stroke="#000" stroke-width="1.1"/>
<text x="1021.50" y="353.10" text-anchor="middle" fill="#000" font-size="13.89" textLength="44.19" lengthAdjust="spacingAndGlyphs">34000</text>
<path d="M1113.50 333.5v5" stroke="#000" stroke-width="1.1"/>
<text x="1113.95" y="353.10" text-anchor="middle" fill="#000" font-size="13.89" textLength="44.19" lengthAdjust="spacingAndGlyphs">35000</text>
<path d="M1206.50 333.5v5" stroke="#000" stroke-width="1.1"/>
<text x="1206.40" y="353.10" text-anchor="middle" fill="#000" font-size="13.89" textLength="44.19" lengthAdjust="spacingAndGlyphs">36000</text>
<path d="M752.5 331.50h-5" stroke="#000" stroke-width="1.1"/>
<text x="742.20" y="336.70" text-anchor="end" fill="#000" font-size="13.89" textLength="30.93" lengthAdjust="spacingAndGlyphs">12.5</text>
<path d="M752.5 294.50h-5" stroke="#000" stroke-width="1.1"/>
<text x="742.20" y="299.90" text-anchor="end" fill="#000" font-size="13.89" textLength="30.93" lengthAdjust="spacingAndGlyphs">15.0</text>
<path d="M752.5 258.50h-5" stroke="#000" stroke-width="1.1"/>
<text x="742.20" y="263.10" text-anchor="end" fill="#000" font-size="13.89" textLength="30.93" lengthAdjust="spacingAndGlyphs">17.5</text>
<path d="M752.5 221.50h-5" stroke="#000" stroke-width="1.1"/>
<text x="742.20" y="226.30" text-anchor="end" fill="#000" font-size="13.89" textLength="30.93" lengthAdjust="spacingAndGlyphs">20.0</text>
<path d="M752.5 184.50h-5" stroke="#000" stroke-width="1.1"/>
<text x="742.20" y="189.50" text-anchor="end" fill="#000" font-size="13.89" textLength="30.93" lengthAdjust="spacingAndGlyphs">22.5</text>
<path d="M752.5 147.50h-5" stroke="#000" stroke-width="1.1"/>
<text x="742.20" y="152.70" text-anchor="end" fill="#000" font-size="13.89" textLength="30.93" lengthAdjust="spacingAndGlyphs">25.0</text>
<text x="990.80" y="372.90" text-anchor="middle" fill="#008000" font-size="13.89" textLength="46.71" lengthAdjust="spacingAndGlyphs">Kp (m)</text>
<text transform="translate(701 228.7) rotate(-90)" text-anchor="middle" fill="#008000" font-size="13.89" textLength="74.70" lengthAdjust="spacingAndGlyphs">Height (m)</text>
<path d="M346.50 455.4V664.5" stroke="#8a8a8a" stroke-width="0.75" stroke-dasharray="2.75 1.15" fill="none"/>
<path d="M466.50 455.4V664.5" stroke="#8a8a8a" stroke-width="0.75" stroke-dasharray="2.75 1.15" fill="none"/>
<path d="M585.50 455.4V664.5" stroke="#8a8a8a" stroke-width="0.75" stroke-dasharray="2.75 1.15" fill="none"/>
<path d="M705.50 455.4V664.5" stroke="#8a8a8a" stroke-width="0.75" stroke-dasharray="2.75 1.15" fill="none"/>
<path d="M825.50 455.4V664.5" stroke="#8a8a8a" stroke-width="0.75" stroke-dasharray="2.75 1.15" fill="none"/>
<path d="M945.50 455.4V664.5" stroke="#8a8a8a" stroke-width="0.75" stroke-dasharray="2.75 1.15" fill="none"/>
<path d="M1064.50 455.4V664.5" stroke="#8a8a8a" stroke-width="0.75" stroke-dasharray="2.75 1.15" fill="none"/>
<path d="M1184.50 455.4V664.5" stroke="#8a8a8a" stroke-width="0.75" stroke-dasharray="2.75 1.15" fill="none"/>
<path d="M304.5 622.50H1230.8" stroke="#8a8a8a" stroke-width="0.75" stroke-dasharray="2.75 1.15" fill="none"/>
<path d="M304.5 580.50H1230.8" stroke="#8a8a8a" stroke-width="0.75" stroke-dasharray="2.75 1.15" fill="none"/>
<path d="M304.5 537.50H1230.8" stroke="#8a8a8a" stroke-width="0.75" stroke-dasharray="2.75 1.15" fill="none"/>
<path d="M304.5 495.50H1230.8" stroke="#8a8a8a" stroke-width="0.75" stroke-dasharray="2.75 1.15" fill="none"/>
<g clip-path="url(#cp3)">
<polyline points="346.30,464.2 466.05,609.5 466.05,652 555.14,651.2 858.83,638.3 858.83,596.2 1040.85,549.6 1188.86,463.9" fill="none" stroke="#0000ff" stroke-width="2.7" stroke-linejoin="round" stroke-linecap="square"/>
<polyline points="346.30,502.3 466.05,615 466.05,653.7 555.14,653.7 858.83,641.2 858.83,598.7 1040.85,546.8 1188.86,474.1" fill="none" stroke="#bf00bf" stroke-width="2.3" stroke-dasharray="7.4 3.2"/>
</g>
<path d="M304.5 455.4V664.5H1230.8" stroke="#000" stroke-width="1.1" fill="none"/>
<path d="M346.50 664.5v5" stroke="#000" stroke-width="1.1"/>
<text x="329.44" y="684.10" text-anchor="start" fill="#000" font-size="13.89" textLength="11.64" lengthAdjust="spacingAndGlyphs">−</text>
<text x="341.07" y="684.10" text-anchor="start" fill="#000" font-size="13.89" textLength="22.09" lengthAdjust="spacingAndGlyphs">2.5</text>
<path d="M466.50 664.5v5" stroke="#000" stroke-width="1.1"/>
<text x="466.05" y="684.10" text-anchor="middle" fill="#000" font-size="13.89" textLength="22.09" lengthAdjust="spacingAndGlyphs">0.0</text>
<path d="M585.50 664.5v5" stroke="#000" stroke-width="1.1"/>
<text x="585.80" y="684.10" text-anchor="middle" fill="#000" font-size="13.89" textLength="22.09" lengthAdjust="spacingAndGlyphs">2.5</text>
<path d="M705.50 664.5v5" stroke="#000" stroke-width="1.1"/>
<text x="705.55" y="684.10" text-anchor="middle" fill="#000" font-size="13.89" textLength="22.09" lengthAdjust="spacingAndGlyphs">5.0</text>
<path d="M825.50 664.5v5" stroke="#000" stroke-width="1.1"/>
<text x="825.30" y="684.10" text-anchor="middle" fill="#000" font-size="13.89" textLength="22.09" lengthAdjust="spacingAndGlyphs">7.5</text>
<path d="M945.50 664.5v5" stroke="#000" stroke-width="1.1"/>
<text x="945.05" y="684.10" text-anchor="middle" fill="#000" font-size="13.89" textLength="30.93" lengthAdjust="spacingAndGlyphs">10.0</text>
<path d="M1064.50 664.5v5" stroke="#000" stroke-width="1.1"/>
<text x="1064.80" y="684.10" text-anchor="middle" fill="#000" font-size="13.89" textLength="30.93" lengthAdjust="spacingAndGlyphs">12.5</text>
<path d="M1184.50 664.5v5" stroke="#000" stroke-width="1.1"/>
<text x="1184.55" y="684.10" text-anchor="middle" fill="#000" font-size="13.89" textLength="30.93" lengthAdjust="spacingAndGlyphs">15.0</text>
<path d="M304.5 622.50h-5" stroke="#000" stroke-width="1.1"/>
<text x="294.20" y="627.60" text-anchor="end" fill="#000" font-size="13.89" textLength="17.67" lengthAdjust="spacingAndGlyphs">20</text>
<path d="M304.5 580.50h-5" stroke="#000" stroke-width="1.1"/>
<text x="294.20" y="585.20" text-anchor="end" fill="#000" font-size="13.89" textLength="17.67" lengthAdjust="spacingAndGlyphs">21</text>
<path d="M304.5 537.50h-5" stroke="#000" stroke-width="1.1"/>
<text x="294.20" y="542.80" text-anchor="end" fill="#000" font-size="13.89" textLength="17.67" lengthAdjust="spacingAndGlyphs">22</text>
<path d="M304.5 495.50h-5" stroke="#000" stroke-width="1.1"/>
<text x="294.20" y="500.40" text-anchor="end" fill="#000" font-size="13.89" textLength="17.67" lengthAdjust="spacingAndGlyphs">23</text>
<text x="466.50" y="621.20" text-anchor="start" fill="#1f77b4" font-size="13.89" textLength="14.53" lengthAdjust="spacingAndGlyphs">rg</text>
<text x="859.30" y="608.60" text-anchor="start" fill="#ff7f0e" font-size="13.89" textLength="14.53" lengthAdjust="spacingAndGlyphs">rd</text>
<text x="767.70" y="705.30" text-anchor="middle" fill="#008000" font-size="13.89" textLength="169.25" lengthAdjust="spacingAndGlyphs">Transverse abscissa (m)</text>
<text transform="translate(266.8 560.3) rotate(-90)" text-anchor="middle" fill="#008000" font-size="13.89" textLength="74.70" lengthAdjust="spacingAndGlyphs">Height (m)</text>
<rect x="1065.5" y="611.5" width="164" height="50" rx="2" fill="#000" fill-opacity="0.35"/>
<rect x="1062.5" y="608.5" width="164" height="50" rx="2" fill="#fff" stroke="#cccccc" stroke-width="1"/>
<path d="M1066.3 617.3H1075.5M1079.6 617.3H1088.8" stroke="#000" stroke-width="3"/>
<path d="M1065.8 632.5H1090.8" stroke="#0000ff" stroke-width="2.5"/>
<path d="M1066.3 648.3H1074M1077.5 648.3H1086" stroke="#bf00bf" stroke-width="2.3"/>
<text x="1097.30" y="621.30" text-anchor="start" fill="#000" font-size="11.11" textLength="123.99" lengthAdjust="spacingAndGlyphs">Previous cross-section</text>
<text x="1097.30" y="636.50" text-anchor="start" fill="#000" font-size="11.11" textLength="74.72" lengthAdjust="spacingAndGlyphs">Cross-section</text>
<text x="1097.30" y="652.30" text-anchor="start" fill="#000" font-size="11.11" textLength="102.68" lengthAdjust="spacingAndGlyphs">Next cross-section</text>
<path d="M1245.5 600.8V605.6M1245.5 609.4V614.7M1245.5 618.2V621.7M1245.5 626V633.5M1245.5 636.2V639.7M1245.5 642.2V657.7" stroke="#000" stroke-width="1.1"/>
<rect x="1245" y="461" width="1" height="1" fill="#909090"/>
<rect x="1245" y="473" width="1" height="1" fill="#ffb0b0"/>
<rect x="1245" y="479" width="1" height="1" fill="#ffc0c0"/>
<rect x="1245" y="497" width="1" height="1" fill="#ff7070"/>
<rect x="1245" y="502" width="1" height="1" fill="#ff0000"/>
<rect x="1245" y="504" width="1" height="1" fill="#ff1010"/>
<rect x="1245" y="508" width="1" height="1" fill="#909090"/>
<rect x="1245" y="509" width="1" height="1" fill="#ffb0b0"/>
<rect x="1245" y="514" width="1" height="1" fill="#a0a0a0"/>
<rect x="1245" y="518" width="1" height="1" fill="#803040"/>
<rect x="1245" y="532" width="1" height="1" fill="#c0a080"/>
<rect x="1245" y="564" width="1" height="1" fill="#000000"/>
<rect x="1245" y="574" width="1" height="1" fill="#d0d0d0"/>
</svg>
</body></html>
